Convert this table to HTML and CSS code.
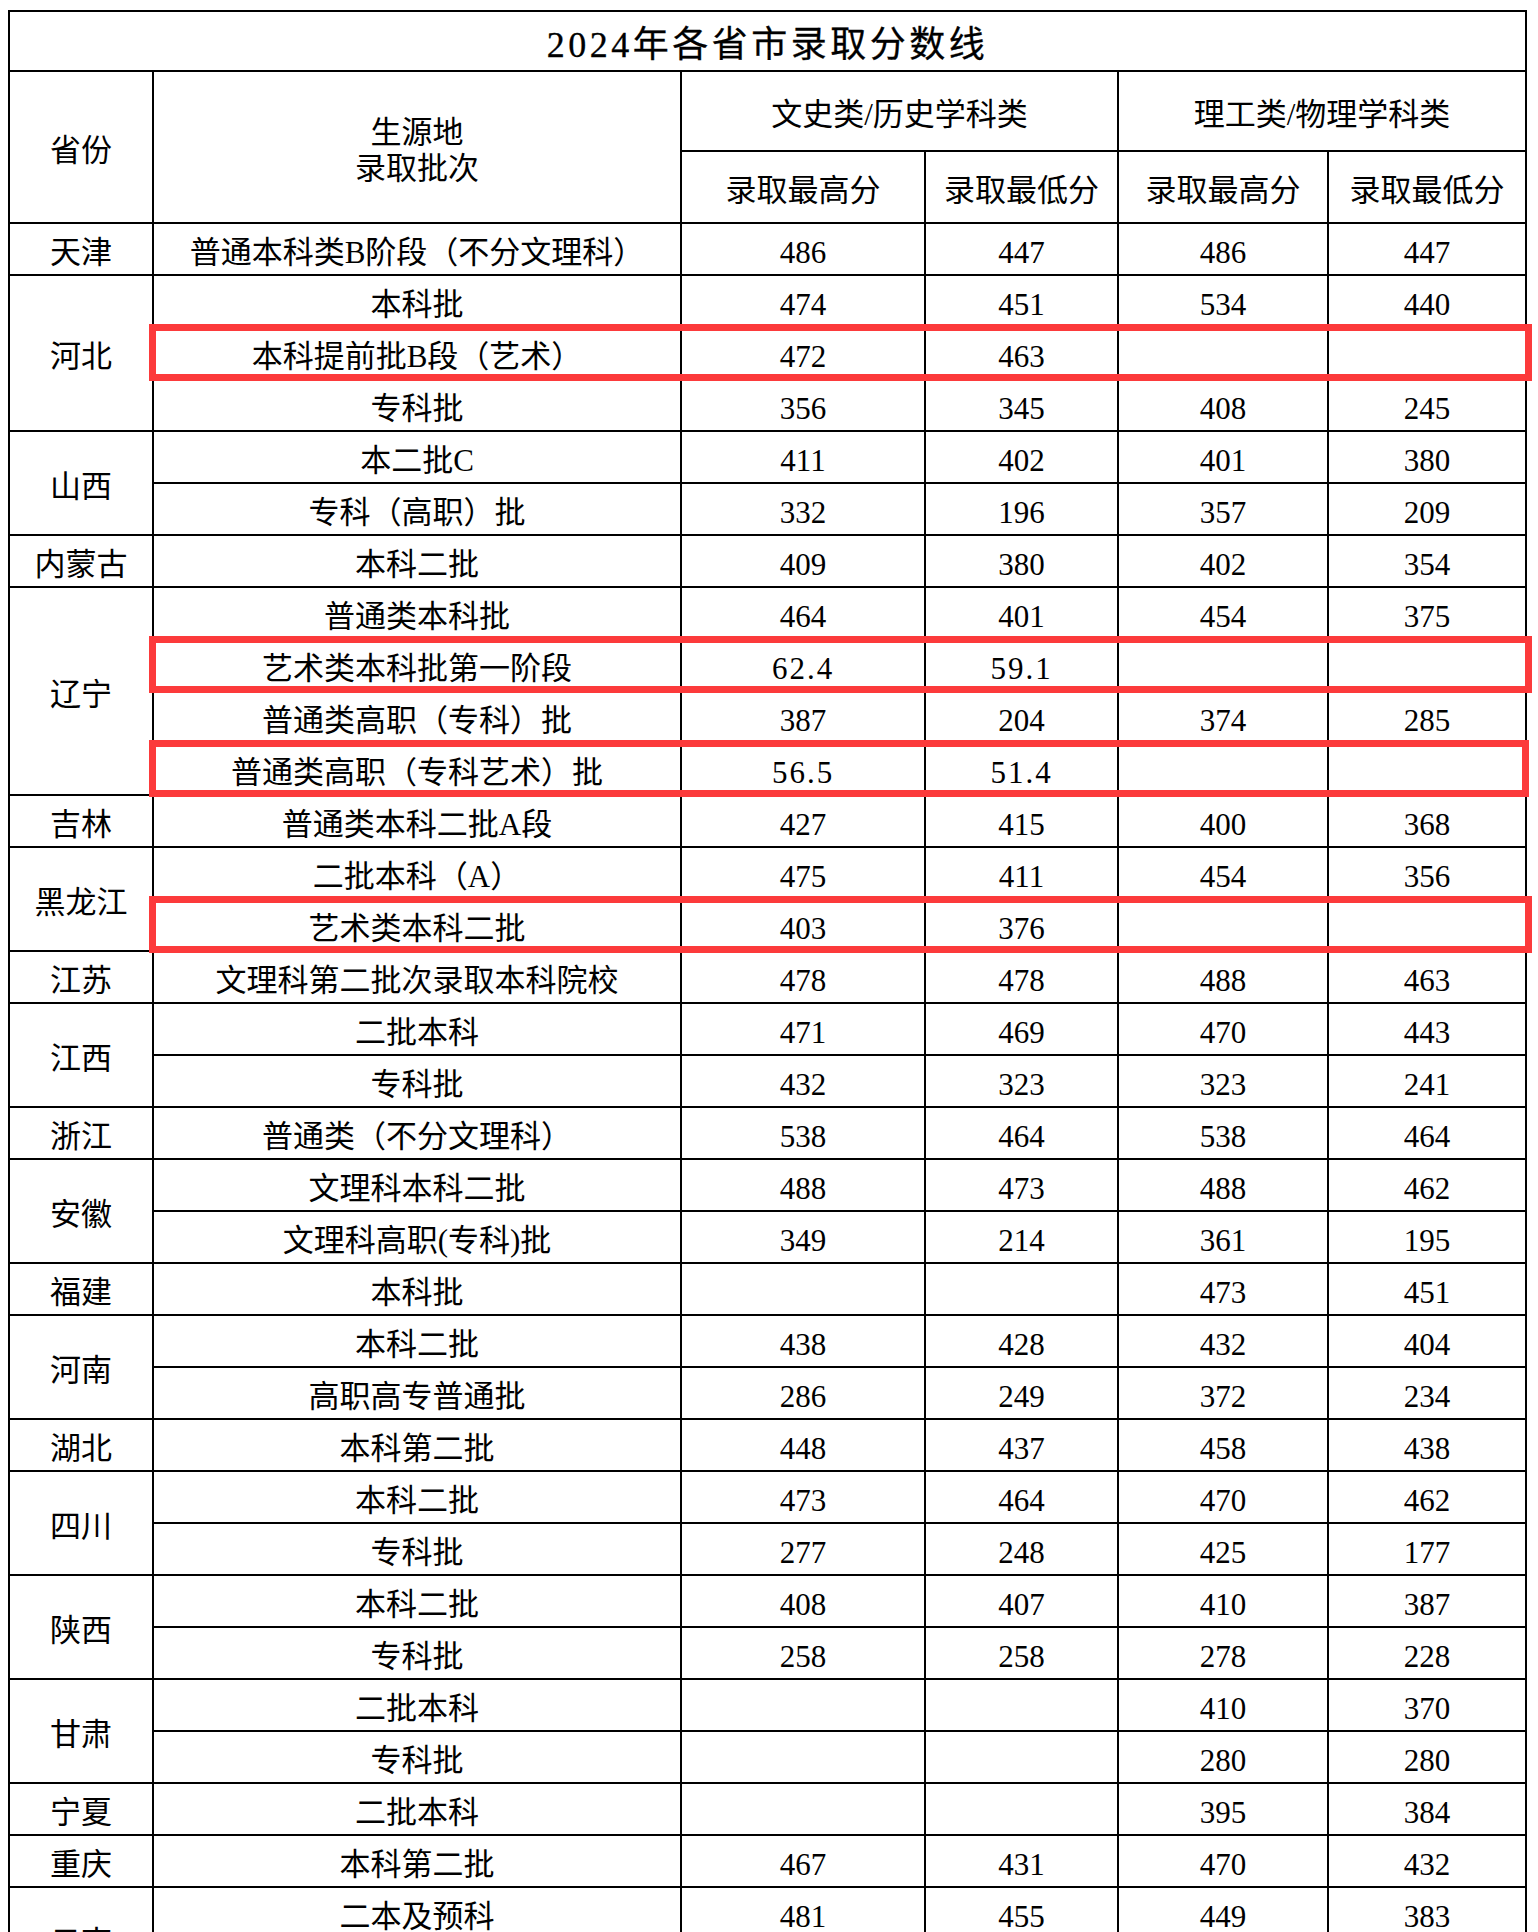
FILE: index.html
```html
<!DOCTYPE html>
<html lang="zh-CN">
<head>
<meta charset="utf-8">
<title>2024年各省市录取分数线</title>
<link rel="stylesheet" href="styles.css">
</head>
<body>
<div class="page">
<table class="scores">
<colgroup>
<col class="c-prov"><col class="c-batch"><col class="c-a"><col class="c-b"><col class="c-c"><col class="c-d">
</colgroup>
<thead>
<tr class="r-title"><th colspan="6" class="title">2024年各省市录取分数线</th></tr>
<tr class="r-h1">
<th rowspan="2">省份</th>
<th rowspan="2" class="two">生源地<br>录取批次</th>
<th colspan="2">文史类/历史学科类</th>
<th colspan="2">理工类/物理学科类</th>
</tr>
<tr class="r-h2">
<th>录取最高分</th><th>录取最低分</th><th>录取最高分</th><th>录取最低分</th>
</tr>
</thead>
<tbody>
<tr><td>天津</td><td>普通本科类B阶段（不分文理科）</td><td>486</td><td>447</td><td>486</td><td>447</td></tr>

<tr><td rowspan="3">河北</td><td>本科批</td><td>474</td><td>451</td><td>534</td><td>440</td></tr>
<tr><td class="hl">本科提前批B段（艺术）</td><td>472</td><td>463</td><td></td><td></td></tr>
<tr><td>专科批</td><td>356</td><td>345</td><td>408</td><td>245</td></tr>

<tr><td rowspan="2">山西</td><td>本二批C</td><td>411</td><td>402</td><td>401</td><td>380</td></tr>
<tr><td>专科（高职）批</td><td>332</td><td>196</td><td>357</td><td>209</td></tr>

<tr><td>内蒙古</td><td>本科二批</td><td>409</td><td>380</td><td>402</td><td>354</td></tr>

<tr><td rowspan="4">辽宁</td><td>普通类本科批</td><td>464</td><td>401</td><td>454</td><td>375</td></tr>
<tr><td class="hl">艺术类本科批第一阶段</td><td class="dec">62.4</td><td class="dec">59.1</td><td></td><td></td></tr>
<tr><td>普通类高职（专科）批</td><td>387</td><td>204</td><td>374</td><td>285</td></tr>
<tr><td class="hl hl-short">普通类高职（专科艺术）批</td><td class="dec">56.5</td><td class="dec">51.4</td><td></td><td></td></tr>

<tr><td>吉林</td><td>普通类本科二批A段</td><td>427</td><td>415</td><td>400</td><td>368</td></tr>

<tr><td rowspan="2">黑龙江</td><td>二批本科（A）</td><td>475</td><td>411</td><td>454</td><td>356</td></tr>
<tr><td class="hl">艺术类本科二批</td><td>403</td><td>376</td><td></td><td></td></tr>

<tr><td>江苏</td><td>文理科第二批次录取本科院校</td><td>478</td><td>478</td><td>488</td><td>463</td></tr>

<tr><td rowspan="2">江西</td><td>二批本科</td><td>471</td><td>469</td><td>470</td><td>443</td></tr>
<tr><td>专科批</td><td>432</td><td>323</td><td>323</td><td>241</td></tr>

<tr><td>浙江</td><td>普通类（不分文理科）</td><td>538</td><td>464</td><td>538</td><td>464</td></tr>

<tr><td rowspan="2">安徽</td><td>文理科本科二批</td><td>488</td><td>473</td><td>488</td><td>462</td></tr>
<tr><td>文理科高职(专科)批</td><td>349</td><td>214</td><td>361</td><td>195</td></tr>

<tr><td>福建</td><td>本科批</td><td></td><td></td><td>473</td><td>451</td></tr>

<tr><td rowspan="2">河南</td><td>本科二批</td><td>438</td><td>428</td><td>432</td><td>404</td></tr>
<tr><td>高职高专普通批</td><td>286</td><td>249</td><td>372</td><td>234</td></tr>

<tr><td>湖北</td><td>本科第二批</td><td>448</td><td>437</td><td>458</td><td>438</td></tr>

<tr><td rowspan="2">四川</td><td>本科二批</td><td>473</td><td>464</td><td>470</td><td>462</td></tr>
<tr><td>专科批</td><td>277</td><td>248</td><td>425</td><td>177</td></tr>

<tr><td rowspan="2">陕西</td><td>本科二批</td><td>408</td><td>407</td><td>410</td><td>387</td></tr>
<tr><td>专科批</td><td>258</td><td>258</td><td>278</td><td>228</td></tr>

<tr><td rowspan="2">甘肃</td><td>二批本科</td><td></td><td></td><td>410</td><td>370</td></tr>
<tr><td>专科批</td><td></td><td></td><td>280</td><td>280</td></tr>

<tr><td>宁夏</td><td>二批本科</td><td></td><td></td><td>395</td><td>384</td></tr>

<tr><td>重庆</td><td>本科第二批</td><td>467</td><td>431</td><td>470</td><td>432</td></tr>

<tr><td rowspan="2">云南</td><td>二本及预科</td><td>481</td><td>455</td><td>449</td><td>383</td></tr>
<tr><td></td><td></td><td></td><td></td><td></td></tr>
</tbody>
</table>
</div>
</body>
</html>
```

FILE: styles.css
```css
html, body {
  margin: 0;
  padding: 0;
  background: #ffffff;
}

.page {
  padding: 10px 0 0 8px;
}

.scores {
  border-collapse: collapse;
  table-layout: fixed;
  width: 1517px;
  font-family: "Liberation Serif", "Noto Sans CJK SC", serif;
  font-size: 31px;
  color: #000;
}

.c-prov { width: 144px; }
.c-batch { width: 528px; }
.c-a { width: 244px; }
.c-b { width: 193px; }
.c-c { width: 210px; }
.c-d { width: 198px; }

.scores th,
.scores td {
  border: 2px solid #000;
  padding: 7px 0 0;
  text-align: center;
  vertical-align: middle;
  font-weight: normal;
  line-height: 36px;
  white-space: nowrap;
}

.scores td {
  height: 43px;
}

.r-title th {
  height: 51px;
}

.title {
  font-size: 36px;
  letter-spacing: 3.5px;
  font-weight: 500;
  -webkit-text-stroke: 0.3px #000;
}

.r-h1 th {
  height: 71px;
}

.r-h2 th {
  height: 63px;
}

.two {
  line-height: 37px;
}

.dec {
  letter-spacing: 2px;
}

.hl {
  position: relative;
}

.hl::after {
  content: "";
  position: absolute;
  left: -5px;
  top: -4px;
  width: 1383px;
  height: 57px;
  box-sizing: border-box;
  border: 7px solid #fc3a3b;
  pointer-events: none;
}

.hl-short::after {
  width: 1380px;
}
```
